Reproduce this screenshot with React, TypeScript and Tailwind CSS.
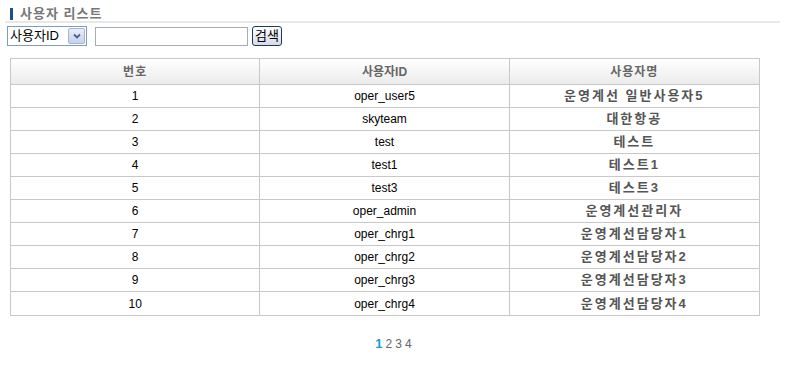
import React from 'react'

const users = [
  { no: 1, id: 'oper_user5', name: '운영계선 일반사용자5' },
  { no: 2, id: 'skyteam', name: '대한항공' },
  { no: 3, id: 'test', name: '테스트' },
  { no: 4, id: 'test1', name: '테스트1' },
  { no: 5, id: 'test3', name: '테스트3' },
  { no: 6, id: 'oper_admin', name: '운영계선관리자' },
  { no: 7, id: 'oper_chrg1', name: '운영계선담당자1' },
  { no: 8, id: 'oper_chrg2', name: '운영계선담당자2' },
  { no: 9, id: 'oper_chrg3', name: '운영계선담당자3' },
  { no: 10, id: 'oper_chrg4', name: '운영계선담당자4' },
]

const font = { fontFamily: '"Liberation Sans", "Noto Sans CJK KR", sans-serif' }

export default function App() {
  return (
    <div className="w-[789px] h-[365px] bg-white text-[12px] text-black" style={font}>
      {/* Title */}
      <div className="flex items-center pt-[6px] pl-[10px] pr-[9px]">
        <div className="w-[3px] h-[12px] bg-[#1f4e8c]" />
        <span className="ml-[7px] text-[13px] font-bold text-[#777] leading-[15px] tracking-[1px]">사용자 리스트</span>
      </div>
      <div className="ml-[5px] mr-[9px] h-[2px] bg-[#e8e8e8]" />

      {/* Search */}
      <div className="flex items-center mt-[3px] pl-[7px]">
        <div className="flex items-center h-[20px] w-[80px] border border-[#7f9db9] bg-white">
          <span className="pl-[2px] text-[13px] leading-[18px] flex-1">사용자ID</span>
          <div className="w-[17px] h-[16px] mr-[1px] rounded-[2px] border border-[#a5b5cf] bg-gradient-to-b from-[#e8eefa] to-[#c5d2eb] flex items-center justify-center">
            <svg width="8" height="6" viewBox="0 0 8 6">
              <path d="M1 1.5 L4 4.5 L7 1.5" stroke="#4d6185" strokeWidth="1.8" fill="none" />
            </svg>
          </div>
        </div>
        <div className="ml-[8px] w-[153px] h-[19px] border border-[#a5acb2] bg-white" />
        <button className="ml-[4px] w-[30px] h-[20px] rounded-[3px] border border-[#1c3a5e] bg-gradient-to-b from-white to-[#d6dae6] text-[13px] leading-[16px] text-black">
          검색
        </button>
      </div>

      {/* Table */}
      <div className="mt-[12px] ml-[10px] w-[750px] border border-[#c8c8c8]">
        <div className="grid grid-cols-3 h-[26px] bg-gradient-to-b from-white to-[#ebebeb] border-b border-[#c8c8c8]">
          <div className="flex items-center justify-center font-bold text-[#666] border-r border-[#c8c8c8] tracking-[1px]">번호</div>
          <div className="flex items-center justify-center font-bold text-[#666] border-r border-[#c8c8c8]">사용자ID</div>
          <div className="flex items-center justify-center font-bold text-[#666] tracking-[1px]">사용자명</div>
        </div>
        {users.map((u, i) => (
          <div
            key={u.no}
            className={
              'grid grid-cols-3 h-[23px] ' + (i < users.length - 1 ? 'border-b border-[#c8c8c8]' : '')
            }
          >
            <div className="flex items-center justify-center border-r border-[#c8c8c8]">{u.no}</div>
            <div className="flex items-center justify-center border-r border-[#c8c8c8]">{u.id}</div>
            <div className="flex items-center justify-center font-bold text-[#555] text-[13px] tracking-[2px]">{u.name}</div>
          </div>
        ))}
      </div>

      {/* Pagination */}
      <div className="flex justify-center items-center gap-[3px] mt-[18px] pr-[2px]">
        <span className="text-[13px] font-bold text-[#1a9ad6]">1</span>
        <span className="text-[#666]">2</span>
        <span className="text-[#666]">3</span>
        <span className="text-[#666]">4</span>
      </div>
    </div>
  )
}
